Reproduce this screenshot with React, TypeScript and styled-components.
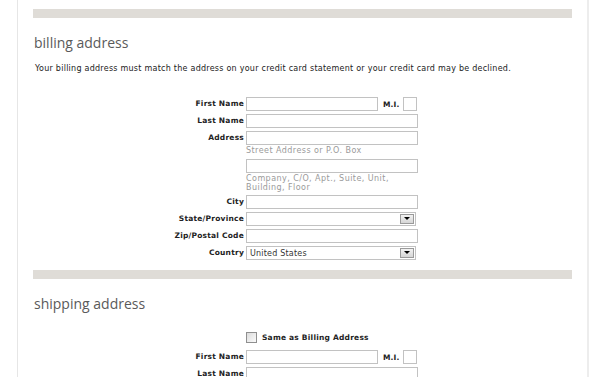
import React from 'react';
import styled, { createGlobalStyle } from 'styled-components';

const Global = createGlobalStyle`
  html, body { margin: 0; padding: 0; background: #fff; }
  body { font-family: "DejaVu Sans", Verdana, sans-serif; color: #222; }
`;

const Page = styled.div`
  margin-left: 17px;
  width: 572px;
  height: 377px;
  overflow: hidden;
  box-sizing: border-box;
  border-left: 1px solid #e6e6e6;
  border-right: 2px solid #ededed;
  padding: 9px 15px 0 15px;
`;

const Bar = styled.div`
  height: 9px;
  background: #dfdcd7;
`;

const Heading = styled.h2`
  margin: 16px 0 0 1px;
  font-family: "Open Sans", "Noto Sans", sans-serif;
  font-weight: 400;
  font-size: 14px;
  line-height: 18px;
  color: #5a5a5a;
`;

const Note = styled.p`
  margin: 12px 0 0 2px;
  font-size: 8px;
  letter-spacing: 0.25px;
  line-height: 10px;
  color: #222;
`;

const Form = styled.div<{ $top: number }>`
  display: grid;
  grid-template-columns: 211px 1fr;
  column-gap: 2px;
  row-gap: 3px;
  margin-top: ${p => p.$top}px;
`;

const Label = styled.div`
  text-align: right;
  font-size: 7.5px;
  letter-spacing: 0.22px;
  font-weight: 700;
  line-height: 14px;
  color: #222;
  white-space: nowrap;
`;

const Cell = styled.div`
  display: flex;
  flex-direction: column;
  align-items: flex-start;
`;

const Line = styled.div`
  display: flex;
  align-items: center;
`;

const Input = styled.div<{ $w: number }>`
  box-sizing: border-box;
  width: ${p => p.$w}px;
  height: 14px;
  border: 1px solid #c2c2c2;
  background: #fff;
`;

const MiLabel = styled.span`
  font-size: 7.5px;
  font-weight: 700;
  letter-spacing: 0.15px;
  margin: 0 3px 0 5px;
  color: #222;
`;

const Hint = styled.div<{ $lh: number; $mt: number }>`
  margin-top: ${p => p.$mt}px;
  font-size: 8px;
  letter-spacing: 0.45px;
  line-height: ${p => p.$lh}px;
  color: #9a9a9a;
  width: 180px;
`;

const Select = styled.div`
  box-sizing: border-box;
  width: 170px;
  height: 14px;
  border: 1px solid #c2c2c2;
  display: flex;
  align-items: center;
  justify-content: space-between;
  padding: 0 1px 0 3px;
  font-size: 8px;
  letter-spacing: 0.2px;
  color: #333;
`;

const Arrow = styled.div`
  box-sizing: border-box;
  width: 14px;
  height: 10px;
  background: linear-gradient(#f2f2f2, #d6d6d6);
  border: 1px solid #9a9a9a;
  display: flex;
  align-items: center;
  justify-content: center;
`;

const Shipping = styled.div`
  margin-top: 10px;
`;

const CheckRow = styled.div`
  grid-column: 2;
  display: flex;
  align-items: center;
  gap: 5px;
  height: 14px;
  margin-bottom: 3px;
  font-size: 7.5px;
  letter-spacing: 0.22px;
  font-weight: 700;
  color: #222;
`;

const Box = styled.div`
  box-sizing: border-box;
  width: 11px;
  height: 11px;
  border: 1px solid #8f8f8f;
  background: linear-gradient(135deg, #dcdcdc, #fafafa);
`;

const Drop = () => (
  <Arrow>
    <svg width="6" height="4" viewBox="0 0 6 4"><path d="M0 0H6L3 3Z" fill="#000" /></svg>
  </Arrow>
);

export default function App() {
  return (
    <>
      <Global />
      <Page>
        <Bar />
        <Heading>billing address</Heading>
        <Note>Your billing address must match the address on your credit card statement or your credit card may be declined.</Note>
        <Form $top={23}>
          <Label>First Name</Label>
          <Line><Input $w={132} /><MiLabel>M.I.</MiLabel><Input $w={14} /></Line>
          <Label>Last Name</Label>
          <Cell><Input $w={172} /></Cell>
          <Label>Address</Label>
          <Cell><Input $w={172} /><Hint $lh={10} $mt={1}>Street Address or P.O. Box</Hint></Cell>
          <Label></Label>
          <Cell><Input $w={172} /><Hint $lh={9} $mt={1}>Company, C/O, Apt., Suite, Unit,<br />Building, Floor</Hint></Cell>
          <Label>City</Label>
          <Cell><Input $w={172} /></Cell>
          <Label>State/Province</Label>
          <Cell><Select><span></span><Drop /></Select></Cell>
          <Label>Zip/Postal Code</Label>
          <Cell><Input $w={172} /></Cell>
          <Label>Country</Label>
          <Cell><Select><span>United States</span><Drop /></Select></Cell>
        </Form>
        <Shipping>
          <Bar />
          <Heading>shipping address</Heading>
          <Form $top={17}>
            <CheckRow><Box />Same as Billing Address</CheckRow>
            <Label>First Name</Label>
            <Line><Input $w={132} /><MiLabel>M.I.</MiLabel><Input $w={14} /></Line>
            <Label>Last Name</Label>
            <Cell><Input $w={172} /></Cell>
          </Form>
        </Shipping>
      </Page>
    </>
  );
}
